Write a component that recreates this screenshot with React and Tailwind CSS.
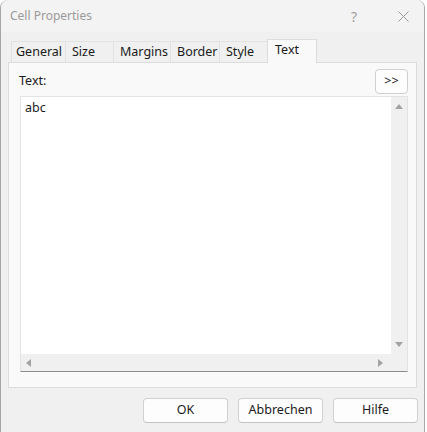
import React from "react";

const tabs = ["General", "Size", "Margins", "Border", "Style", "Text"];
const tabWidths = { General: 55, Size: 48, Margins: 57, Border: 49, Style: 48, Text: 50 };

function Arrow({ dir }) {
  // small scrollbar triangles
  const pts = {
    up: "0,5 4,0 8,5",
    down: "0,0 8,0 4,5",
    left: "5,0 5,8 0,4",
    right: "0,0 5,4 0,8",
  }[dir];
  const vertical = dir === "up" || dir === "down";
  return (
    <svg width={vertical ? 8 : 5} height={vertical ? 5 : 8} viewBox={vertical ? "0 0 8 5" : "0 0 5 8"}>
      <polygon points={pts} fill="#a3a3a3" />
    </svg>
  );
}

function DialogButton({ children }) {
  return (
    <button className="w-[85px] h-[25px] rounded-[4px] border border-[#d0d0d0] border-b-[#c4c4c4] bg-[#fdfdfd] text-[12.5px] text-[#1b1b1b] flex items-center justify-center">
      {children}
    </button>
  );
}

export default function App() {
  return (
    <div className="w-[427px] h-[432px] bg-white overflow-hidden" style={{ fontFamily: '"Noto Sans", "Open Sans", sans-serif' }}>
      <div className="w-[425px] h-[432px] bg-[#f0f0f0] border-l border-r border-[#a6a6a6] rounded-t-[8px] flex flex-col">
        {/* title bar */}
        <div className="h-[32px] flex items-center bg-[#f3f3f3] rounded-t-[8px] pl-[9px]">
          <span className="text-[12px] text-[#9a9a9a]">Cell Properties</span>
          <span className="ml-auto text-[14px] text-[#a0a0a0] w-[12px] text-center">?</span>
          <svg className="ml-[38px] mr-[15px]" width="11" height="11" viewBox="0 0 11 11">
            <path d="M0.5 0.5 L10.5 10.5 M10.5 0.5 L0.5 10.5" stroke="#9a9a9a" strokeWidth="1" />
          </svg>
        </div>

        {/* tabs + page */}
        <div className="pl-[7px] pr-[7px] pt-[7px]">
          <div className="flex items-end h-[23px] pl-[3px]">
            {tabs.map((t, i) => {
              const active = t === "Text";
              return (
                <div
                  key={t}
                  style={{ width: tabWidths[t] }}
                  className={
                    active
                      ? "h-[24px] -mb-px -ml-px relative z-10 bg-[#f9f9f9] border border-b-0 border-[#dcdcdc] text-[12.5px] text-[#1a1a1a] pl-[7px] pt-[1px]"
                      : i === 0
                      ? "h-[21px] bg-[#f0f0f0] border border-b-0 border-[#e2e2e2] text-[12.5px] text-[#1a1a1a] pl-[4px] pt-[1px]"
                      : "h-[21px] bg-[#f0f0f0] border-t border-r border-[#e2e2e2] text-[12.5px] text-[#1a1a1a] pl-[6px] pt-[1px]"
                  }
                >
                  {t}
                </div>
              );
            })}
          </div>

          <div className="h-[326px] bg-[#f9f9f9] border border-[#dcdcdc] pt-[6px] pl-[11px] pr-[8px] flex flex-col">
            <div className="flex items-start justify-between h-[27px]">
              <span className="text-[12.5px] text-[#1a1a1a] mt-[3px] -ml-[1px]">Text:</span>
              <button className="w-[33px] h-[25px] rounded-[4px] border border-[#d0d0d0] bg-[#fdfdfd] text-[12.5px] text-[#1a1a1a] flex items-center justify-center">
                &gt;&gt;
              </button>
            </div>

            {/* text box with scrollbars */}
            <div className="h-[276px] border border-[#e3e3e3] border-b-[#8c8c8c] bg-white flex flex-col">
              <div className="flex flex-1">
                <div className="flex-1 pl-[4px] pt-[2px] text-[12.5px] text-[#1a1a1a]">abc</div>
                <div className="w-[16px] bg-[#f0f0f0] flex flex-col items-center justify-between py-[7px]">
                  <Arrow dir="up" />
                  <Arrow dir="down" />
                </div>
              </div>
              <div className="h-[17px] bg-[#f0f0f0] flex items-center justify-between pl-[5px] pr-[24px]">
                <Arrow dir="left" />
                <Arrow dir="right" />
              </div>
            </div>
          </div>
        </div>

        {/* dialog buttons */}
        <div className="flex justify-end gap-[10px] pr-[6px] pt-[10px]">
          <DialogButton>OK</DialogButton>
          <DialogButton>Abbrechen</DialogButton>
          <DialogButton>Hilfe</DialogButton>
        </div>
      </div>
    </div>
  );
}
